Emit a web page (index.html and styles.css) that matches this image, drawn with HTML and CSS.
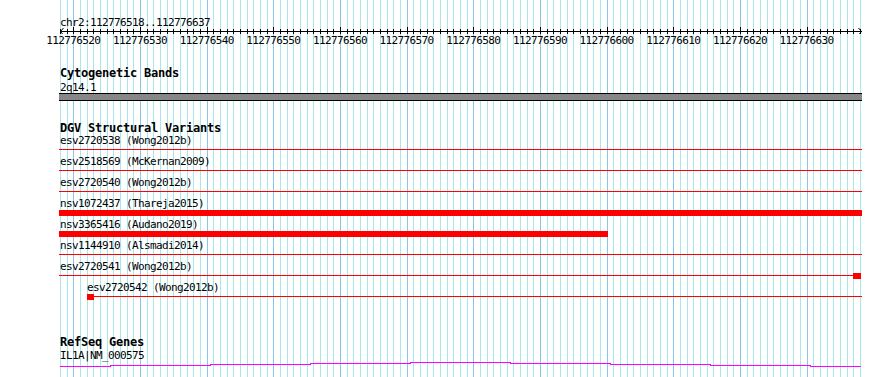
FILE: index.html
```html
<!DOCTYPE html>
<html>
<head>
<meta charset="utf-8">
<title>Genome browser</title>
<link rel="stylesheet" href="styles.css">
</head>
<body>
<div class="page">
  <svg class="grid" width="801" height="377" shape-rendering="crispEdges">
    <defs>
      <pattern id="minor" width="20" height="10" patternUnits="userSpaceOnUse">
        <rect x="0" y="0" width="1" height="10" fill="#a8e8ec"/>
        <rect x="7" y="0" width="1" height="10" fill="#a8e8ec"/>
        <rect x="13" y="0" width="1" height="10" fill="#a8e8ec"/>
      </pattern>
      <pattern id="major" width="200" height="10" patternUnits="userSpaceOnUse">
        <rect x="13" y="0" width="1" height="10" fill="#88c6ea"/>
        <rect x="80" y="0" width="1" height="10" fill="#88c6ea"/>
        <rect x="147" y="0" width="1" height="10" fill="#88c6ea"/>
      </pattern>
    </defs>
    <rect x="0" y="0" width="801" height="377" fill="url(#minor)"/>
    <rect x="0" y="0" width="801" height="377" fill="url(#major)"/>
  </svg>

  <div class="content">
    <div class="ruler-label">chr2:112776518..112776637</div>
    <svg class="axis" width="806" height="7">
      <defs>
        <pattern id="tminor" x="3" width="20" height="7" patternUnits="userSpaceOnUse">
          <rect x="0" y="2" width="1" height="5" fill="#000"/>
          <rect x="7" y="2" width="1" height="5" fill="#000"/>
          <rect x="13" y="2" width="1" height="5" fill="#000"/>
        </pattern>
        <pattern id="tmajor" x="3" width="200" height="7" patternUnits="userSpaceOnUse">
          <rect x="13" y="0" width="1" height="7" fill="#000"/>
          <rect x="80" y="0" width="1" height="7" fill="#000"/>
          <rect x="147" y="0" width="1" height="7" fill="#000"/>
        </pattern>
      </defs>
      <rect x="3" y="0" width="801" height="7" fill="url(#tminor)" shape-rendering="crispEdges"/>
      <rect x="3" y="0" width="801" height="7" fill="url(#tmajor)" shape-rendering="crispEdges"/>
      <rect x="3" y="4" width="802" height="1" fill="#000" shape-rendering="crispEdges"/>
      <polyline points="6.5,1 3.5,4.5 6.5,8" fill="none" stroke="#000" stroke-width="1"/>
      <polyline points="801.5,1 804.5,4.5 801.5,8" fill="none" stroke="#000" stroke-width="1"/>
    </svg>
    <div class="ticklabels">
      <span class="tick">112776520</span>
      <span class="tick">112776530</span>
      <span class="tick">112776540</span>
      <span class="tick">112776550</span>
      <span class="tick">112776560</span>
      <span class="tick">112776570</span>
      <span class="tick">112776580</span>
      <span class="tick">112776590</span>
      <span class="tick">112776600</span>
      <span class="tick">112776610</span>
      <span class="tick">112776620</span>
      <span class="tick">112776630</span>
    </div>

    <section class="track track-cyto">
      <div class="track-title">Cytogenetic Bands</div>
      <div class="feat-label">2q14.1</div>
      <div class="band"></div>
    </section>

    <section class="track track-dgv">
      <div class="track-title">DGV Structural Variants</div>
      <div class="row">
        <div class="feat-label">esv2720538 (Wong2012b)</div>
        <div class="feat"><div class="line full"></div></div>
      </div>
      <div class="row">
        <div class="feat-label">esv2518569 (McKernan2009)</div>
        <div class="feat"><div class="line full"></div></div>
      </div>
      <div class="row">
        <div class="feat-label">esv2720540 (Wong2012b)</div>
        <div class="feat"><div class="line full"></div></div>
      </div>
      <div class="row">
        <div class="feat-label">nsv1072437 (Thareja2015)</div>
        <div class="feat"><div class="bar full"></div></div>
      </div>
      <div class="row">
        <div class="feat-label">nsv3365416 (Audano2019)</div>
        <div class="feat"><div class="bar" style="width:549px"></div></div>
      </div>
      <div class="row">
        <div class="feat-label">nsv1144910 (Alsmadi2014)</div>
        <div class="feat"><div class="line full"></div></div>
      </div>
      <div class="row">
        <div class="feat-label">esv2720541 (Wong2012b)</div>
        <div class="feat"><div class="line" style="width:794px"></div><div class="block" style="width:8px"></div></div>
      </div>
      <div class="row">
        <div class="feat-label" style="margin-left:87px">esv2720542 (Wong2012b)</div>
        <div class="feat" style="margin-left:87px"><div class="block" style="width:7px"></div><div class="line" style="width:768px"></div></div>
      </div>
    </section>

    <section class="track track-refseq">
      <div class="track-title">RefSeq Genes</div>
      <div class="feat-label">IL1A|NM_000575</div>
      <svg class="gene" width="803" height="7" shape-rendering="crispEdges">
        <polyline points="1,5.5 51,5.5 51,4.5 151,4.5 151,3.5 251,3.5 251,2.5 351,2.5 351,1.5 451,1.5 451,2.5 551,2.5 551,3.5 651,3.5 651,4.5 751,4.5 751,5.5 802,5.5" fill="none" stroke="#ff00ff" stroke-width="1"/>
      </svg>
    </section>
  </div>
</div>
</body>
</html>
```
FILE: styles.css
```css
html, body {
  margin: 0;
  padding: 0;
  background: #ffffff;
}

.page {
  position: relative;
  width: 890px;
  height: 377px;
  overflow: hidden;
  background: #ffffff;
  color: #000000;
  font-family: "DejaVu Sans Mono", "Liberation Mono", monospace;
  font-size: 11px;
  letter-spacing: -0.62px;
}

.grid {
  position: absolute;
  left: 60px;
  top: 0;
  display: block;
}

.content {
  position: relative;
  padding-top: 16px;
}

.ruler-label {
  margin-left: 60px;
  height: 13px;
  line-height: 13px;
  white-space: nowrap;
}

.axis {
  display: block;
  margin-left: 57px;
  margin-top: -2px;
}

.ticklabels {
  display: flex;
  margin-left: 40px;
  height: 13px;
  line-height: 13px;
}

.tick {
  flex: none;
  width: 66.667px;
  text-align: center;
  white-space: nowrap;
}

.track-title {
  margin-left: 60px;
  height: 13px;
  line-height: 13px;
  font-size: 12px;
  font-weight: bold;
  letter-spacing: -0.22px;
  white-space: nowrap;
}

.track-cyto {
  margin-top: 20px;
}

.track-cyto .feat-label {
  margin-top: 2px;
}

.feat-label {
  margin-left: 60px;
  height: 11px;
  line-height: 11px;
  white-space: nowrap;
}

.band {
  margin-left: 59px;
  width: 803px;
  height: 6px;
  background: #878787;
  border-top: 1px solid #000;
  border-bottom: 1px solid #000;
}

.track-dgv {
  margin-top: 21px;
}

.row {
  height: 21px;
}

.feat {
  display: flex;
  align-items: flex-start;
  box-sizing: border-box;
  height: 10px;
  padding-top: 1px;
  margin-left: 59px;
  width: 803px;
}

.line {
  flex: none;
  height: 1px;
  margin-top: 2px;
  background: #ff0000;
}

.bar,
.block {
  flex: none;
  height: 6px;
  background: #ff0000;
}

.full {
  flex: 1 1 auto;
}

.track-refseq {
  margin-top: 33px;
}

.track-refseq .feat-label {
  margin-top: 1px;
}

.gene {
  display: block;
  margin-left: 59px;
}
```
